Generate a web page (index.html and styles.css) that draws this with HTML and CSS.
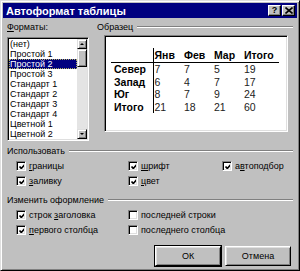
FILE: index.html
```html
<!DOCTYPE html>
<html lang="ru">
<head>
    <meta charset="UTF-8">
    <title>Автоформат таблицы</title>
    <link rel="stylesheet" href="styles.css">
</head>
<body>
    <div class="window">
        <div class="titlebar">
            <span class="title">Автоформат таблицы</span>
            <div class="caption-buttons">
                <span class="caption-btn help">?</span>
                <span class="caption-btn close">
                    <svg width="8" height="7" viewBox="0 0 8 7"><path d="M0.5 0.5 L7.5 6.5 M7.5 0.5 L0.5 6.5" stroke="#000" stroke-width="1.6"/></svg>
                </span>
            </div>
        </div>

        <div class="content">
            <div class="top">
                <div class="formats">
                    <div class="label"><u>Ф</u>орматы:</div>
                    <div class="listbox">
                        <ul class="items">
                            <li>(нет)</li>
                            <li>Простой 1</li>
                            <li class="selected">Простой 2</li>
                            <li>Простой 3</li>
                            <li>Стандарт 1</li>
                            <li>Стандарт 2</li>
                            <li>Стандарт 3</li>
                            <li>Стандарт 4</li>
                            <li>Цветной 1</li>
                            <li>Цветной 2</li>
                        </ul>
                        <div class="scrollbar">
                            <span class="arrow up"></span>
                            <span class="thumb"></span>
                            <span class="track"></span>
                            <span class="arrow down"></span>
                        </div>
                    </div>
                </div>

                <div class="sample">
                    <div class="separator"><span>Образец</span></div>
                    <div class="preview">
                        <table class="sample-table">
                            <colgroup>
                                <col class="c-label">
                                <col class="c-num">
                                <col class="c-num">
                                <col class="c-num">
                                <col class="c-total">
                            </colgroup>
                            <tr class="head">
                                <th></th>
                                <th>Янв</th>
                                <th>Фев</th>
                                <th>Мар</th>
                                <th>Итого</th>
                            </tr>
                            <tr><th>Север</th><td>7</td><td>7</td><td>5</td><td>19</td></tr>
                            <tr><th>Запад</th><td>6</td><td>4</td><td>7</td><td>17</td></tr>
                            <tr><th>Юг</th><td>8</td><td>7</td><td>9</td><td>24</td></tr>
                            <tr><th>Итого</th><td>21</td><td>18</td><td>21</td><td>60</td></tr>
                        </table>
                    </div>
                </div>
            </div>

            <div class="separator section"><span>Использовать</span></div>
            <div class="options">
                <label class="check"><span class="box on"></span><span><u>г</u>раницы</span></label>
                <label class="check"><span class="box on"></span><span><u>ш</u>рифт</span></label>
                <label class="check"><span class="box on"></span><span>а<u>в</u>топодбор</span></label>
                <label class="check"><span class="box on"></span><span><u>з</u>аливку</span></label>
                <label class="check"><span class="box on"></span><span><u>ц</u>вет</span></label>
            </div>

            <div class="separator section"><span>Изменить оформление</span></div>
            <div class="options">
                <label class="check"><span class="box on"></span><span>строк <u>з</u>аголовка</span></label>
                <label class="check wide"><span class="box"></span><span>последней строки</span></label>
                <label class="check"><span class="box on"></span><span><u>п</u>ервого столбца</span></label>
                <label class="check wide"><span class="box"></span><span>последнего столбца</span></label>
            </div>

            <div class="actions">
                <button class="btn default">ОК</button>
                <button class="btn">Отмена</button>
            </div>
        </div>
    </div>
</body>
</html>
```

FILE: styles.css
```css
body {
    margin: 0;
    background: #c0c0c0;
    font-family: "Liberation Sans", Arial, sans-serif;
    font-size: 9px;
    color: #000;
}
.window {
    width: 300px;
    height: 271px;
    box-sizing: border-box;
    background: #c0c0c0;
    border: 1px solid;
    border-color: #dfdfdf #000 #000 #dfdfdf;
    box-shadow: inset 1px 1px #fff, inset -1px -1px #808080;
    padding: 2px;
    display: flex;
    flex-direction: column;
}
.titlebar {
    height: 15px;
    background: #000080;
    display: flex;
    align-items: center;
    justify-content: space-between;
    padding: 0 2px 0 3px;
}
.title {
    color: #fff;
    font-weight: bold;
    font-size: 11px;
}
.caption-buttons {
    display: flex;
    gap: 1px;
}
.caption-btn {
    width: 13px;
    height: 11px;
    box-sizing: border-box;
    background: #c0c0c0;
    border: 1px solid;
    border-color: #fff #000 #000 #fff;
    box-shadow: inset -1px -1px #808080;
    display: flex;
    align-items: center;
    justify-content: center;
    font-weight: bold;
    font-size: 9px;
    line-height: 9px;
}
.content {
    flex: 1;
    padding: 3px 4px 0 4px;
    display: flex;
    flex-direction: column;
}
.top {
    display: flex;
    gap: 8px;
}
.formats {
    width: 82px;
}
.label {
    height: 10px;
    line-height: 10px;
    margin-top: 1px;
}
.listbox {
    margin-top: 5px;
    height: 104px;
    box-sizing: border-box;
    display: flex;
    background: #fff;
    border: 1px solid;
    border-color: #808080 #fff #fff #808080;
    box-shadow: inset 1px 1px #000, inset -1px -1px #dfdfdf;
    padding: 1px;
}
.items {
    list-style: none;
    margin: 0;
    padding: 0;
    flex: 1;
}
.items li {
    height: 10px;
    line-height: 10px;
    padding-left: 1px;
    white-space: nowrap;
}
.items li.selected {
    background: #000080;
    color: #fff;
    outline: 1px dotted #b0b060;
    outline-offset: -1px;
}
.scrollbar {
    width: 10px;
    display: flex;
    flex-direction: column;
}
.arrow,
.thumb {
    height: 10px;
    box-sizing: border-box;
    background: #c0c0c0;
    border: 1px solid;
    border-color: #dfdfdf #000 #000 #dfdfdf;
    box-shadow: inset 1px 1px #fff, inset -1px -1px #808080;
    position: relative;
}
.thumb {
    height: 18px;
}
.track {
    flex: 1;
    background: #e4e4e4;
}
.arrow::after {
    content: "";
    position: absolute;
    left: 2px;
    top: 3px;
    border-left: 2px solid transparent;
    border-right: 2px solid transparent;
}
.arrow.up::after {
    border-bottom: 2px solid #000;
}
.arrow.down::after {
    border-top: 2px solid #000;
}
.sample {
    flex: 1;
}
.separator {
    display: flex;
    align-items: center;
    gap: 4px;
    height: 10px;
    line-height: 10px;
    margin-top: 1px;
}
.separator::after {
    content: "";
    flex: 1;
    height: 0;
    border-top: 1px solid #808080;
    border-bottom: 1px solid #fff;
}
.preview {
    margin: 3px 5px 0 7px;
    height: 97px;
    box-sizing: border-box;
    background: #fff;
    border: 1px solid;
    border-color: #808080 #fff #fff #808080;
    box-shadow: inset 1px 1px #000, inset -1px -1px #dfdfdf;
    padding: 12px 0 0 6px;
}
.sample-table {
    border-collapse: collapse;
    table-layout: fixed;
    width: 168px;
    font-size: 10.5px;
}
.c-label {
    width: 42px;
}
.c-num {
    width: 30px;
}
.c-total {
    width: 36px;
}
.sample-table th,
.sample-table td {
    padding: 0 0 0 1px;
    text-align: left;
    height: 12.5px;
    line-height: 12px;
    white-space: nowrap;
}
.sample-table td {
    color: #222;
}
.sample-table th:first-child {
    padding-left: 3px;
    border-right: 1.5px solid #000;
}
.sample-table .head th {
    height: 14px;
    border-bottom: 1.5px solid #000;
}
.section {
    margin-top: 5px;
}
.section + .options + .section {
    margin-top: 7px;
}
.options {
    display: grid;
    grid-template-columns: 112px 94px 1fr;
    grid-auto-rows: 15px;
    padding-left: 9px;
    margin-top: 2px;
}
.check {
    display: flex;
    align-items: center;
    gap: 3px;
    white-space: nowrap;
}
.check.wide {
    grid-column: 2 / 4;
}
.box {
    width: 10px;
    height: 10px;
    box-sizing: border-box;
    background: #fff;
    border: 1px solid;
    border-color: #808080 #fff #fff #808080;
    box-shadow: inset 1px 1px #000, inset -1px -1px #dfdfdf;
    flex: none;
}
.box.on {
    background: #fff url("data:image/svg+xml,%3Csvg xmlns='http://www.w3.org/2000/svg' width='8' height='8'%3E%3Cpath d='M1.5 3.5 L3.3 5.5 L6.8 1.5' fill='none' stroke='%23000' stroke-width='1.7'/%3E%3C/svg%3E") no-repeat 1px 1px;
}
.actions {
    margin-top: 9px;
    display: flex;
    justify-content: flex-end;
    gap: 4px;
    padding-right: 2px;
}
.btn {
    width: 66px;
    height: 20px;
    box-sizing: border-box;
    font-family: "Liberation Sans", Arial, sans-serif;
    font-size: 9px;
    background: #c0c0c0;
    color: #000;
    border: 1px solid;
    border-color: #fff #000 #000 #fff;
    box-shadow: inset 1px 1px #dfdfdf, inset -1px -1px #808080;
    padding: 0;
}
.btn.default {
    outline: 1px solid #000;
}
```
